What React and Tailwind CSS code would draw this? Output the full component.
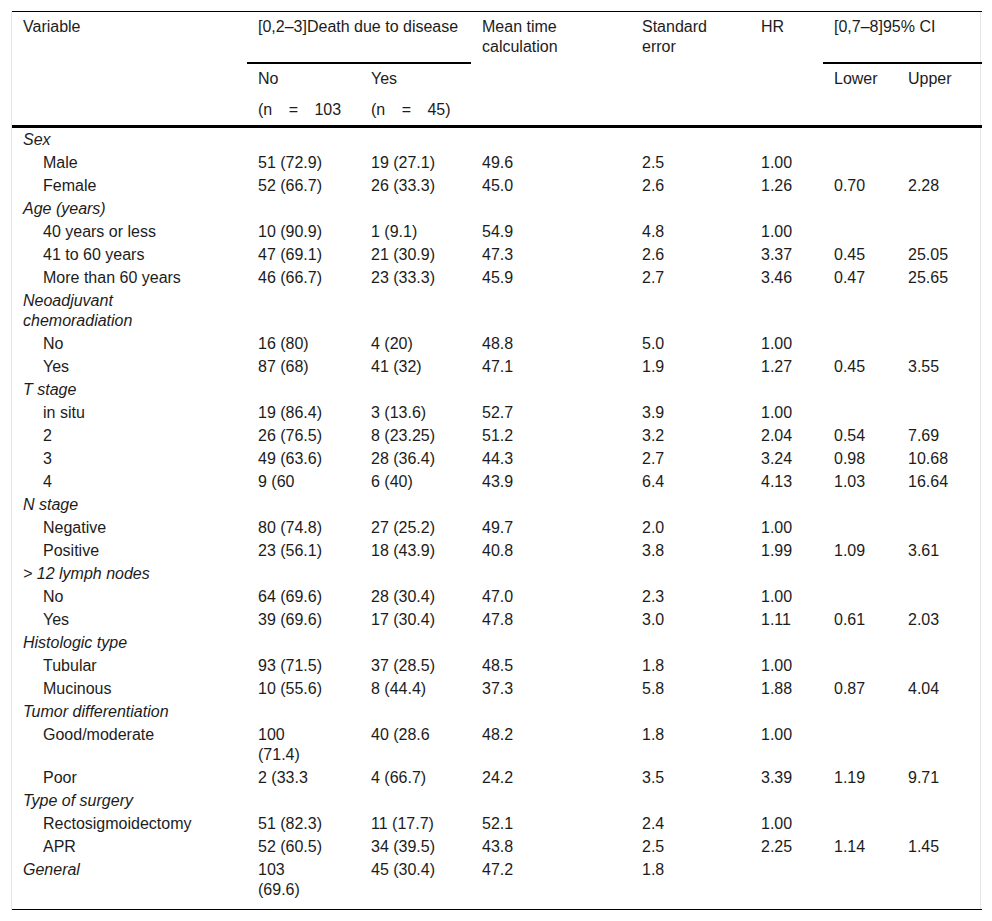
import React from 'react';

const rows = [
  { g: 'Sex' },
  { l: 'Male', c: ['51 (72.9)', '19 (27.1)', '49.6', '2.5', '1.00', '', ''] },
  { l: 'Female', c: ['52 (66.7)', '26 (33.3)', '45.0', '2.6', '1.26', '0.70', '2.28'] },
  { g: 'Age (years)' },
  { l: '40 years or less', c: ['10 (90.9)', '1 (9.1)', '54.9', '4.8', '1.00', '', ''] },
  { l: '41 to 60 years', c: ['47 (69.1)', '21 (30.9)', '47.3', '2.6', '3.37', '0.45', '25.05'] },
  { l: 'More than 60 years', c: ['46 (66.7)', '23 (33.3)', '45.9', '2.7', '3.46', '0.47', '25.65'] },
  { g: ['Neoadjuvant', 'chemoradiation'] },
  { l: 'No', c: ['16 (80)', '4 (20)', '48.8', '5.0', '1.00', '', ''] },
  { l: 'Yes', c: ['87 (68)', '41 (32)', '47.1', '1.9', '1.27', '0.45', '3.55'] },
  { g: 'T stage' },
  { l: 'in situ', c: ['19 (86.4)', '3 (13.6)', '52.7', '3.9', '1.00', '', ''] },
  { l: '2', c: ['26 (76.5)', '8 (23.25)', '51.2', '3.2', '2.04', '0.54', '7.69'] },
  { l: '3', c: ['49 (63.6)', '28 (36.4)', '44.3', '2.7', '3.24', '0.98', '10.68'] },
  { l: '4', c: ['9 (60', '6 (40)', '43.9', '6.4', '4.13', '1.03', '16.64'] },
  { g: 'N stage' },
  { l: 'Negative', c: ['80 (74.8)', '27 (25.2)', '49.7', '2.0', '1.00', '', ''] },
  { l: 'Positive', c: ['23 (56.1)', '18 (43.9)', '40.8', '3.8', '1.99', '1.09', '3.61'] },
  { g: '> 12 lymph nodes' },
  { l: 'No', c: ['64 (69.6)', '28 (30.4)', '47.0', '2.3', '1.00', '', ''] },
  { l: 'Yes', c: ['39 (69.6)', '17 (30.4)', '47.8', '3.0', '1.11', '0.61', '2.03'] },
  { g: 'Histologic type' },
  { l: 'Tubular', c: ['93 (71.5)', '37 (28.5)', '48.5', '1.8', '1.00', '', ''] },
  { l: 'Mucinous', c: ['10 (55.6)', '8 (44.4)', '37.3', '5.8', '1.88', '0.87', '4.04'] },
  { g: 'Tumor differentiation' },
  { l: 'Good/moderate', c: [['100', '(71.4)'], '40 (28.6', '48.2', '1.8', '1.00', '', ''] },
  { l: 'Poor', c: ['2 (33.3', '4 (66.7)', '24.2', '3.5', '3.39', '1.19', '9.71'] },
  { g: 'Type of surgery' },
  { l: 'Rectosigmoidectomy', c: ['51 (82.3)', '11 (17.7)', '52.1', '2.4', '1.00', '', ''] },
  { l: 'APR', c: ['52 (60.5)', '34 (39.5)', '43.8', '2.5', '2.25', '1.14', '1.45'] },
  { gl: 'General', c: [['103', '(69.6)'], '45 (30.4)', '47.2', '1.8', '', '', ''] },
];

const Lines = ({ v }) =>
  Array.isArray(v) ? (
    <>
      {v[0]}
      <br />
      {v[1]}
    </>
  ) : (
    v
  );

const td = 'pl-[11px] pt-[2px] pb-[1px] align-top whitespace-nowrap';
const th = 'pl-[11px] pt-[5px] pb-[5px] align-top font-normal text-left whitespace-nowrap';

export default function App() {
  return (
    <div className="bg-white p-[11px] text-[16px] leading-[20px] text-[#1c1c1c] font-['Liberation_Sans',Arial,sans-serif]">
      <div className="border-x border-[#e6e6e6]">
        <table className="w-full table-fixed border-collapse">
          <colgroup>
            <col className="w-[235px]" />
            <col className="w-[113px]" />
            <col className="w-[111px]" />
            <col className="w-[160px]" />
            <col className="w-[119px]" />
            <col className="w-[73px]" />
            <col className="w-[74px]" />
            <col className="w-[85px]" />
          </colgroup>
          <thead>
            <tr className="h-[51px] border-t border-black">
              <th rowSpan={3} className={th}>Variable</th>
              <th colSpan={2} className={`${th} border-b-2 border-black`}>[0,2–3]Death due to disease</th>
              <th rowSpan={3} className={th}>Mean time<br />calculation</th>
              <th rowSpan={3} className={th}>Standard<br />error</th>
              <th rowSpan={3} className={th}>HR</th>
              <th colSpan={2} className={`${th} border-b-2 border-black`}>[0,7–8]95% CI</th>
            </tr>
            <tr className="h-[32px]">
              <th className={th}>No</th>
              <th className={th}>Yes</th>
              <th rowSpan={2} className={th}>Lower</th>
              <th rowSpan={2} className={th}>Upper</th>
            </tr>
            <tr className="h-[32px] border-b-[3px] border-black">
              <th className={`${th} [word-spacing:12px]`}>(n = 103</th>
              <th className={`${th} [word-spacing:12px]`}>(n = 45)</th>
            </tr>
          </thead>
          <tbody className="border-b border-black">
            {rows.map((r, i) =>
              r.g ? (
                <tr key={i}>
                  <td className={`${td} italic`}>
                    <Lines v={r.g} />
                  </td>
                  <td colSpan={7} />
                </tr>
              ) : (
                <tr key={i}>
                  <td className={`${td} ${r.gl ? 'italic' : 'pl-[31px]'}`}>{r.gl || r.l}</td>
                  {r.c.map((c, j) => (
                    <td key={j} className={td}>
                      <Lines v={c} />
                    </td>
                  ))}
                </tr>
              )
            )}
            <tr>
              <td colSpan={8} className="h-[8px]" />
            </tr>
          </tbody>
        </table>
      </div>
    </div>
  );
}
